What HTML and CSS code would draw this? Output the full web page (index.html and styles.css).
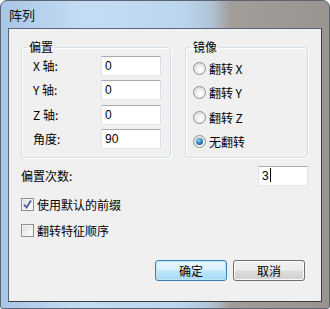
FILE: index.html
```html
<!DOCTYPE html>
<html lang="zh-CN">
<head>
  <meta charset="UTF-8">
  <title>阵列</title>
  <link rel="stylesheet" href="styles.css">
</head>
<body>
  <div class="window">
    <div class="titlebar">阵列</div>
    <div class="client">
      <div class="groups">
        <fieldset class="group group-offset">
          <legend>偏置</legend>
          <div class="offset-grid">
            <label class="lbl">X 轴:</label>
            <div class="field">0</div>
            <label class="lbl">Y 轴:</label>
            <div class="field">0</div>
            <label class="lbl">Z 轴:</label>
            <div class="field">0</div>
            <label class="lbl">角度:</label>
            <div class="field">90</div>
          </div>
        </fieldset>

        <fieldset class="group group-mirror">
          <legend>镜像</legend>
          <div class="radio-list">
            <div class="radio"><span class="radio-dot"></span>翻转 X</div>
            <div class="radio"><span class="radio-dot"></span>翻转 Y</div>
            <div class="radio"><span class="radio-dot"></span>翻转 Z</div>
            <div class="radio"><span class="radio-dot checked"></span>无翻转</div>
          </div>
        </fieldset>
      </div>

      <div class="count-row">
        <span>偏置次数:</span>
        <div class="field field-count">3<span class="caret"></span></div>
      </div>

      <div class="check check-first">
        <span class="check-box">
          <svg width="11" height="11" viewBox="0 0 11 11">
            <path d="M2 5.5 L4.5 8.5 L9 1.5" fill="none" stroke="#4a5f97" stroke-width="1.8"/>
          </svg>
        </span>
        使用默认的前缀
      </div>
      <div class="check">
        <span class="check-box"></span>
        翻转特征顺序
      </div>

      <div class="buttons">
        <button class="btn btn-default">确定</button>
        <button class="btn">取消</button>
      </div>
    </div>
  </div>
</body>
</html>
```

FILE: styles.css
```css
body {
  margin: 0;
  background: #fff;
  font-family: "Noto Sans CJK SC", "Liberation Sans", sans-serif;
  font-size: 12px;
  color: #000;
}
.window {
  width: 330px;
  height: 309px;
  box-sizing: border-box;
  padding: 0 7px 7px 7px;
  border: 1px solid #5b6470;
  border-radius: 7px 7px 3px 3px;
  background: linear-gradient(to right, #aac6e6 0%, #c4dcf3 25%, #bcd5ef 55%, #b0c4d6 64%, #a29d98 70%, #99948f 100%);
}
.titlebar {
  height: 27px;
  box-sizing: border-box;
  padding: 6px 0 0 1px;
  font-size: 13px;
  line-height: 16px;
  color: #111;
}
.client {
  height: 274px;
  box-sizing: border-box;
  background: #f0f0f0;
  border: 1px solid;
  border-color: #56687f #3b3b3b #3b3b3b #56687f;
  padding: 10px 13px 0 12px;
}
.groups {
  display: flex;
  gap: 14px;
}
.group {
  margin: 0;
  border: 1px solid #d5dfe5;
  border-radius: 3px;
  box-shadow: inset 1px 1px 0 #fff, 1px 1px 0 #fff;
  min-width: 0;
}
.group legend {
  line-height: 16px;
  padding: 0 2px;
}
.group-offset {
  width: 151px;
  box-sizing: border-box;
  padding: 1px 10px 5px 11px;
}
.group-offset legend {
  margin-left: -6px;
}
.group-mirror {
  width: 124px;
  box-sizing: border-box;
  padding: 1px 7px 5px 7px;
}
.group-mirror legend {
  margin-left: -2px;
}
.offset-grid {
  display: grid;
  grid-template-columns: 68px 60px;
  grid-auto-rows: 20px;
  row-gap: 4.4px;
  align-items: center;
}
.lbl {
  line-height: 16px;
}
.field {
  height: 20px;
  box-sizing: border-box;
  background: #fff;
  border: 1px solid;
  border-color: #abadb3 #dbdfe6 #e3e9ef #e2e3ea;
  padding: 0 3px;
  line-height: 18px;
  font-family: "Liberation Sans", sans-serif;
  font-size: 12px;
}
.radio-list {
  display: grid;
  grid-auto-rows: 20px;
  row-gap: 4.5px;
  padding-top: 2px;
}
.radio {
  display: flex;
  align-items: center;
  gap: 3px;
}
.radio-dot {
  width: 11px;
  height: 11px;
  border: 1px solid #8e8f8f;
  border-radius: 50%;
  background: radial-gradient(circle at 60% 65%, #fff 0%, #f0f0f0 40%, #d4d4d4 100%);
  position: relative;
}
.radio-dot.checked::after {
  content: "";
  position: absolute;
  left: 2px;
  top: 2px;
  width: 7px;
  height: 7px;
  border-radius: 50%;
  background: radial-gradient(circle at 40% 35%, #8fd0f5 0%, #2d7fbf 50%, #0f3f78 100%);
}
.count-row {
  display: flex;
  justify-content: space-between;
  align-items: center;
  margin-top: 8px;
}
.field-count {
  width: 50px;
}
.caret {
  display: inline-block;
  width: 1px;
  height: 14px;
  background: #000;
  vertical-align: -2px;
  margin-left: 1px;
}
.check {
  display: flex;
  align-items: center;
  gap: 3px;
  height: 16px;
  margin-top: 10px;
}
.check-first {
  margin-top: 11px;
}
.check-box {
  width: 11px;
  height: 11px;
  border: 1px solid #8e8f8f;
  background: linear-gradient(135deg, #dcdcdc, #f4f4f4 70%, #fff);
  display: flex;
  align-items: center;
  justify-content: center;
  box-shadow: inset 0 0 0 1px #f4f4f4;
}
.buttons {
  display: flex;
  justify-content: flex-end;
  gap: 6px;
  margin-top: 21px;
  padding-right: 3px;
}
.btn {
  width: 72px;
  height: 21px;
  border: 1px solid #707070;
  border-radius: 3px;
  background: linear-gradient(#f2f2f2 0%, #ebebeb 48%, #dddddd 52%, #cfcfcf 100%);
  font-family: "Noto Sans CJK SC", sans-serif;
  font-size: 12px;
  padding: 0;
  color: #000;
  box-shadow: inset 0 0 0 1px #fbfbfb;
}
.btn-default {
  border-color: #3c7fb1;
  background: linear-gradient(#eaf6fd 0%, #d9f0fc 48%, #bee6fd 52%, #a7d9f5 100%);
  box-shadow: inset 0 0 0 1px #bde6fd;
}
```
